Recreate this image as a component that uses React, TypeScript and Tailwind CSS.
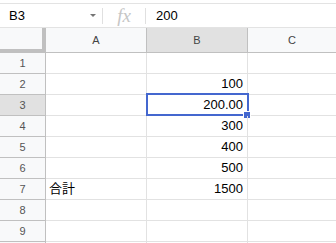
import React from "react";

const ROWS: { n: number; a?: string; b?: string }[] = [
  { n: 1 },
  { n: 2, b: "100" },
  { n: 3, b: "200.00" },
  { n: 4, b: "300" },
  { n: 5, b: "400" },
  { n: 6, b: "500" },
  { n: 7, a: "合計", b: "1500" },
  { n: 8 },
  { n: 9 },
  { n: 10 },
];

const SELECTED_ROW = 3;
const LAST_VISIBLE_ROW = 9;

export default function App() {
  return (
    <div className="w-[336px] h-[243px] overflow-hidden bg-white font-['Liberation_Sans','Noto_Sans_CJK_JP',sans-serif] text-black">
      <div className="h-[3px]" />

      {/* Formula bar */}
      <div className="flex h-[25px] items-center border-y border-[#e3e3e3] text-[13px]">
        <div className="flex w-[102px] items-center justify-between pl-[9px] pr-[6px]">
          <span>B3</span>
          <svg width="6" height="3" viewBox="0 0 6 3">
            <path d="M0 0h6L3 3z" fill="#757575" />
          </svg>
        </div>
        <div className="h-[16px] w-px bg-[#e0e0e0]" />
        <div className="flex w-[42px] justify-center font-['Liberation_Serif',serif] text-[19px] italic leading-none text-[#c6c6c6]">
          fx
        </div>
        <div className="h-[16px] w-px bg-[#e0e0e0]" />
        <span className="pl-[10px]">200</span>
      </div>

      {/* Column headers */}
      <div className="grid h-[25px] grid-cols-[46px_101px_101px_1fr] text-[11px] text-[#444]">
        <div className="border-b-4 border-r-4 border-[#c0c0c0] bg-[#f8f9fa]" />
        <div className="flex items-center justify-center border-b border-r border-[#c0c0c0] bg-[#f8f9fa]">A</div>
        <div className="flex items-center justify-center border-b border-r border-[#c0c0c0] bg-[#e1e1e1]">B</div>
        <div className="flex items-center justify-center border-b border-[#c0c0c0] bg-[#f8f9fa]">C</div>
      </div>

      {/* Rows */}
      {ROWS.map((r) => (
        <div key={r.n} className="grid h-[21px] grid-cols-[46px_101px_101px_1fr]">
          <div
            className={`flex items-center justify-center border-b border-r border-[#c0c0c0] text-[11px] text-[#555] ${
              r.n === SELECTED_ROW ? "bg-[#e1e1e1]" : "bg-[#f8f9fa]"
            }`}
          >
            {r.n <= LAST_VISIBLE_ROW ? r.n : null}
          </div>
          <div className="flex items-center border-b border-r border-[#e2e2e2] pl-[3px] text-[13px]">{r.a}</div>
          <div className="relative flex items-center justify-end border-b border-r border-[#e2e2e2] pr-[4px] text-[13px]">
            {r.b}
            {r.n === SELECTED_ROW && (
              <>
                <div className="absolute -left-[1px] -top-[2px] h-[23px] w-[103px] border-2 border-[#4467cf]" />
                <div className="absolute left-[96px] top-[16px] h-[8px] w-[8px] border border-white bg-[#4467cf]" />
              </>
            )}
          </div>
          <div className="border-b border-[#e2e2e2]" />
        </div>
      ))}
    </div>
  );
}
